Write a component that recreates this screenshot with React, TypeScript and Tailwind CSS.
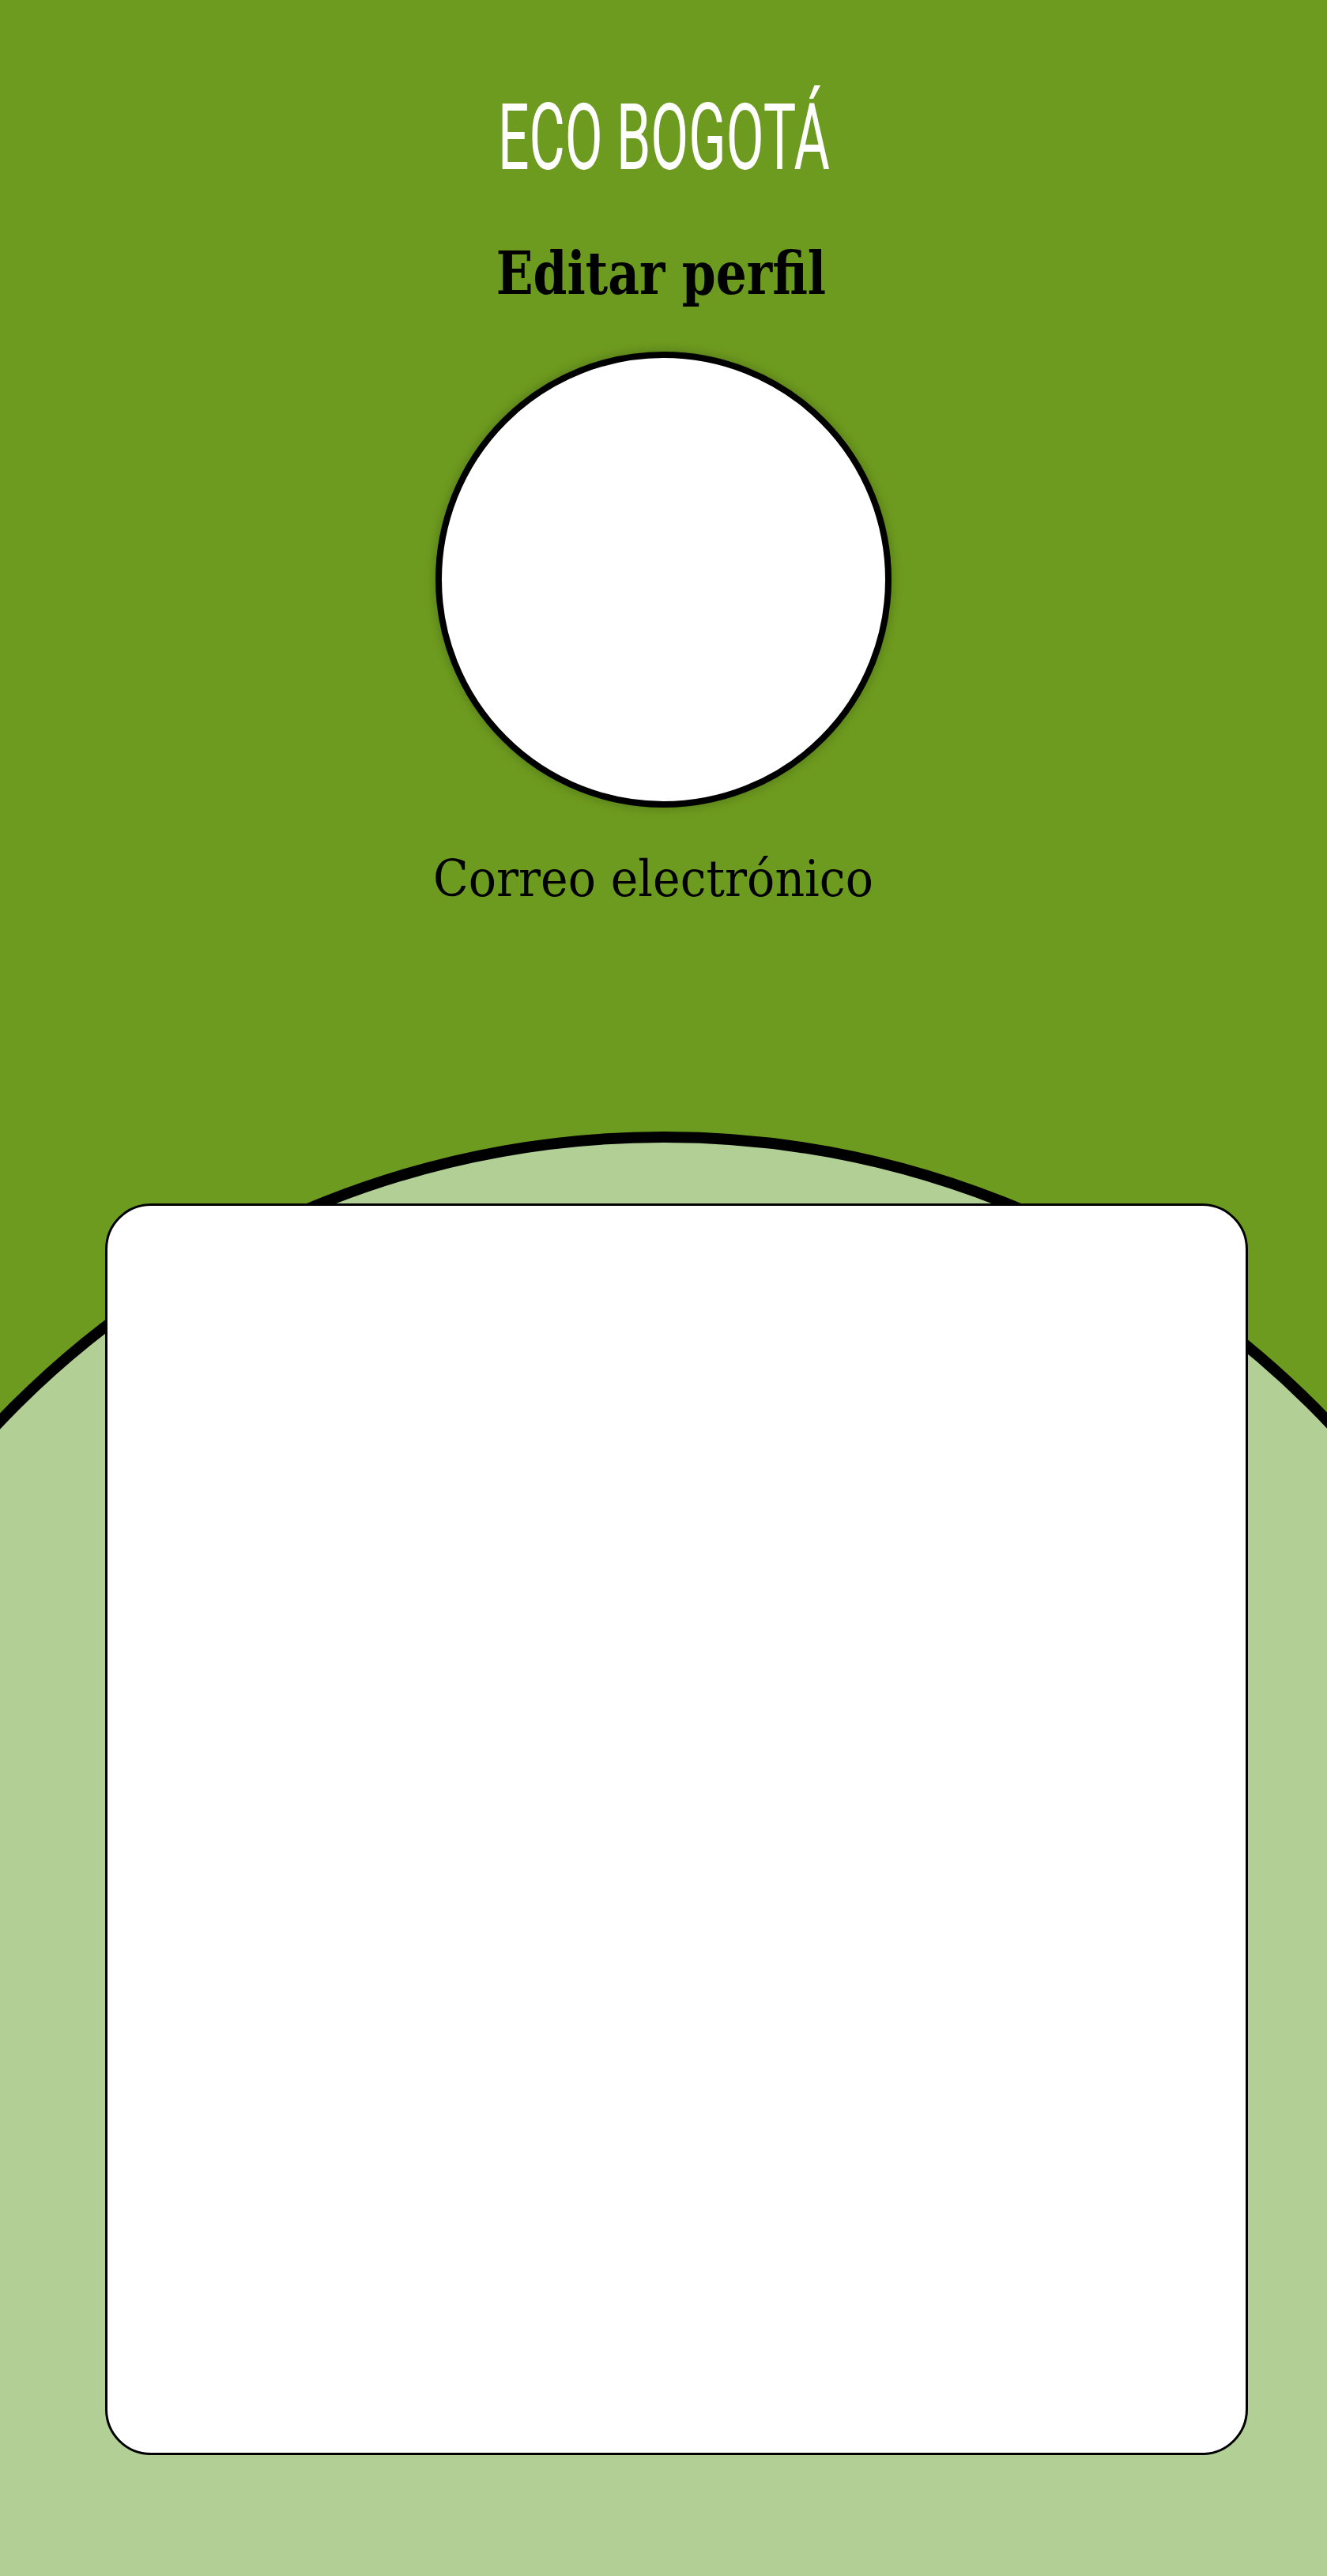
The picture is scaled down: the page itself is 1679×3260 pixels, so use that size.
export default function App() {
  return (
    <div className="relative h-[3260px] w-full overflow-hidden bg-[#6d9b1f]">
      {/* big arc behind the card */}
      <div className="absolute left-[-328px] top-[1432px] h-[2336px] w-[2336px] rounded-full border-[14px] border-black bg-[#b2cf96]" />

      <div className="relative flex flex-col items-center">
        <h1
          className="mt-[116px] h-[117px] scale-x-[0.595] whitespace-nowrap text-[117px] font-normal leading-none text-white"
          style={{ fontFamily: 'Roboto, "Open Sans", sans-serif' }}
        >
          ECO BOGOTÁ
        </h1>

        <h2
          className="mt-[76px] mr-[6px] h-[74px] scale-x-[0.83] whitespace-nowrap text-[74px] font-bold leading-none text-black"
          style={{ fontFamily: '"DejaVu Serif", "Liberation Serif", serif' }}
        >
          Editar perfil
        </h2>

        {/* avatar */}
        <div className="mt-[62px] h-[577px] w-[577px] rounded-full border-[8px] border-black bg-white shadow-[0_0_14px_rgba(0,0,0,0.25)]" />

        <p
          className="mt-[59px] mr-[26px] h-[63px] scale-x-[0.93] whitespace-nowrap text-[63px] leading-none text-black"
          style={{ fontFamily: '"DejaVu Serif", "Liberation Serif", serif' }}
        >
          Correo electrónico
        </p>
      </div>

      {/* form card */}
      <div className="relative ml-[133px] mt-[379px] h-[1584px] w-[1446px] rounded-[58px] border-[3px] border-black bg-white" />
    </div>
  )
}
